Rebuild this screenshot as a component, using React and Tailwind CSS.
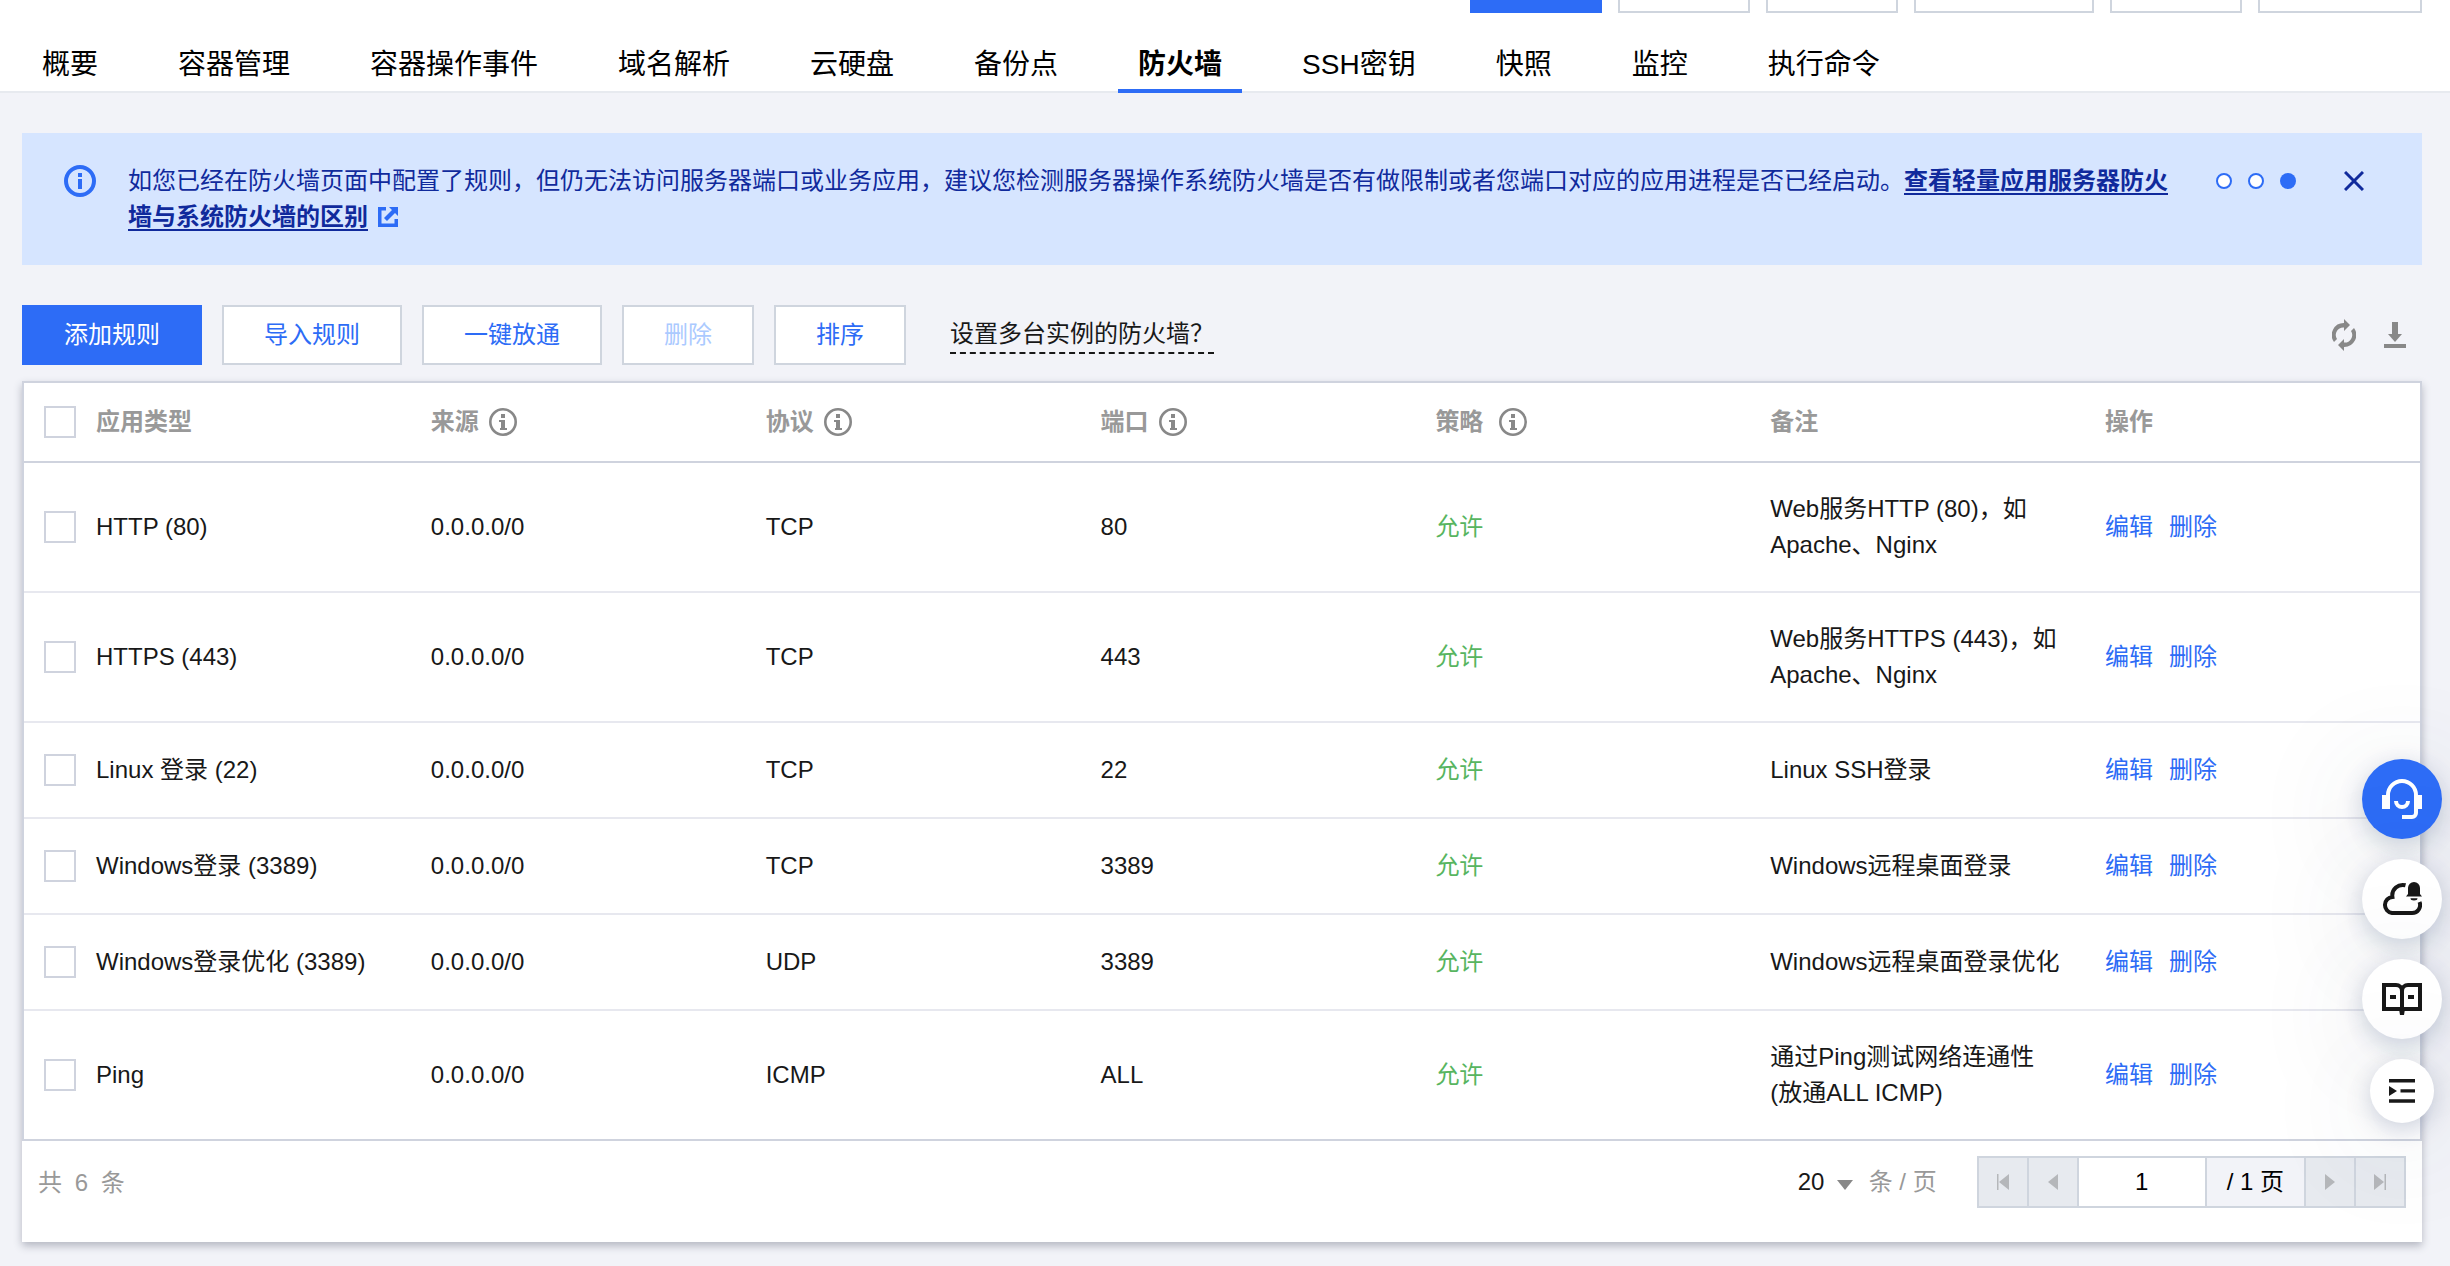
import React, { useState } from "react";

const tabs = [
  "概要",
  "容器管理",
  "容器操作事件",
  "域名解析",
  "云硬盘",
  "备份点",
  "防火墙",
  "SSH密钥",
  "快照",
  "监控",
  "执行命令",
];

const rules = [
  { id: 1, app: "HTTP (80)", source: "0.0.0.0/0", protocol: "TCP", port: "80", remark: "Web服务HTTP (80)，如Apache、Nginx" },
  { id: 2, app: "HTTPS (443)", source: "0.0.0.0/0", protocol: "TCP", port: "443", remark: "Web服务HTTPS (443)，如Apache、Nginx" },
  { id: 3, app: "Linux 登录 (22)", source: "0.0.0.0/0", protocol: "TCP", port: "22", remark: "Linux SSH登录" },
  { id: 4, app: "Windows登录 (3389)", source: "0.0.0.0/0", protocol: "TCP", port: "3389", remark: "Windows远程桌面登录" },
  { id: 5, app: "Windows登录优化 (3389)", source: "0.0.0.0/0", protocol: "UDP", port: "3389", remark: "Windows远程桌面登录优化" },
  { id: 6, app: "Ping", source: "0.0.0.0/0", protocol: "ICMP", port: "ALL", remark: "通过Ping测试网络连通性 (放通ALL ICMP)" },
];

const columns = [
  { title: "应用类型" },
  { title: "来源", info: true },
  { title: "协议", info: true },
  { title: "端口", info: true },
  { title: "策略", info: true, wide: true },
  { title: "备注" },
  { title: "操作" },
];

// -----------------------------------------------------------------------------
// Icons
// -----------------------------------------------------------------------------
function InfoIcon({ className }) {
  return (
    <svg viewBox="0 0 28 28" className={className} fill="none" aria-hidden="true">
      <circle cx="14" cy="14" r="12.7" stroke="currentColor" strokeWidth="2.6" />
      <path d="M12 6h4v4h-4zM10 12h6v8h2v2h-7v-2h1v-6h-2z" fill="currentColor" />
    </svg>
  );
}

function BannerInfoIcon() {
  return (
    <svg viewBox="0 0 32 32" className="size-8 shrink-0 text-[#2d6cf6]" fill="none" aria-hidden="true">
      <circle cx="16" cy="16" r="14" stroke="currentColor" strokeWidth="4" />
      <path d="M14 8h4v4h-4zM14 14h4v10h-4z" fill="currentColor" />
    </svg>
  );
}

function ExternalIcon() {
  return (
    <svg viewBox="0 0 20 20" className="ml-2.5 inline-block size-5 align-[-2px] text-[#2d6cf6]" aria-hidden="true">
      <path d="M0 0h8v3.5H3.500v13h13V12H20v8H0zM11 0h9v9l-3-3-8 8-3-3 8-8z" fill="currentColor" />
    </svg>
  );
}

function RefreshIcon() {
  return (
    <svg viewBox="0 0 24 32" className="h-8 w-6" aria-hidden="true">
      <path
        d="M12 0l6 6-6 6V8.500a7.500 7.500 0 0 0-7 11.500l-3 3A12 12 0 0 1 12 4zM12 32l-6-6 6-6v3.500a7.500 7.500 0 0 0 7-11.500l3-3a12 12 0 0 1-10 19z"
        fill="currentColor"
      />
    </svg>
  );
}

function DownloadIcon() {
  return (
    <svg viewBox="0 0 22 26" className="h-[26px] w-[22px]" aria-hidden="true">
      <path d="M8 0h6v12h4l-7 8-7-8h4zM0 22h22v4H0z" fill="currentColor" />
    </svg>
  );
}

function HeadsetIcon() {
  return (
    <svg viewBox="0 0 40 40" className="size-10" fill="none" aria-hidden="true">
      <path d="M6 18v-2a14 14 0 0 1 28 0v18a4 4 0 0 1-4 4H20" stroke="currentColor" strokeWidth="4" />
      <path d="M0 16h8v14H0zM32 16h8v14h-8z" fill="currentColor" />
      <path d="M14 22a6 6 0 0 0 12 0" stroke="currentColor" strokeWidth="4" />
    </svg>
  );
}

function CloudBellIcon() {
  return (
    <svg viewBox="0 0 40 40" className="size-10" fill="none" aria-hidden="true">
      <path
        d="M23.500 6.300A10.500 10.500 0 0 0 10.400 17.900A8.100 8.100 0 0 0 10 34h20a8 8 0 0 0 7.500-11"
        stroke="currentColor"
        strokeWidth="4"
      />
      <path d="M26 15V9a6 6 0 0 1 12 0v6l2 2.600H24zM28.500 19.200h7a3.500 2.200 0 0 1-7 0z" fill="currentColor" />
    </svg>
  );
}

function BookIcon() {
  return (
    <svg viewBox="0 0 40 40" className="size-10" fill="none" aria-hidden="true">
      <path d="M20 33V12a6 6 0 0 0-6-6H2v24h36V6H26a6 6 0 0 0-6 6" stroke="currentColor" strokeWidth="4" />
      <path d="M8 16h6v4H8zM26 16h6v4h-6zM17 30h6l-1 6h-4z" fill="currentColor" />
    </svg>
  );
}

function IndentIcon() {
  return (
    <svg viewBox="0 0 26 24" className="h-6 w-[26px]" aria-hidden="true">
      <path d="M0 0h26v3.500H0zM11.500 10.200H26v3.300H11.500zM0 20.200h26v3.500H0zM0 7l8 5-8 5z" fill="currentColor" />
    </svg>
  );
}

// -----------------------------------------------------------------------------
// Header: instance actions and tabs
// -----------------------------------------------------------------------------
function PageHeader() {
  return (
    <header className="border-b-2 border-[#e7eaef] bg-white">
      <div className="flex h-[13px] justify-end gap-4 px-7" aria-hidden="true">
        <div className="w-[132px] bg-[#2d6cf6]" />
        <div className="w-[132px] border-2 border-t-0 border-[#cfd5de]" />
        <div className="w-[132px] border-2 border-t-0 border-[#cfd5de]" />
        <div className="w-[180px] border-2 border-t-0 border-[#cfd5de]" />
        <div className="w-[132px] border-2 border-t-0 border-[#cfd5de]" />
        <div className="w-[164px] border-2 border-t-0 border-[#cfd5de]" />
      </div>
      <nav className="-mb-0.5 flex gap-10 px-[22px] pt-6">
        {tabs.map(tab => (
          <a
            key={tab}
            href="#"
            className={
              tab === "防火墙"
                ? "border-b-4 border-[#2d6cf6] px-5 pt-2 pb-1 text-[28px] leading-10 font-bold text-black"
                : "border-b-4 border-transparent px-5 pt-2 pb-1 text-[28px] leading-10 text-black"
            }
          >
            {tab}
          </a>
        ))}
      </nav>
    </header>
  );
}

function Notice() {
  return (
    <section className="flex bg-[#d6e5ff] py-[30px] pr-[58px] pl-[42px] leading-9 text-[#102a9c]">
      <div className="flex h-9 items-center">
        <BannerInfoIcon />
      </div>
      <p className="ml-8 flex-1">
        如您已经在防火墙页面中配置了规则，但仍无法访问服务器端口或业务应用，建议您检测服务器操作系统防火墙是否有做限制或者您端口对应的应用进程是否已经启动。
        <a href="#" className="font-bold underline decoration-2 underline-offset-4">
          查看轻量应用服务器防火墙与系统防火墙的区别
        </a>
        <ExternalIcon />
      </p>
      <div className="ml-10 flex h-9 items-center gap-4">
        <button aria-label="1" className="size-4 rounded-full border-2 border-[#2d6cf6] bg-white" />
        <button aria-label="2" className="size-4 rounded-full border-2 border-[#2d6cf6] bg-white" />
        <button aria-label="3" className="size-4 rounded-full bg-[#2d6cf6]" />
      </div>
      <button aria-label="关闭" className="ml-12 flex h-9 items-center">
        <svg viewBox="0 0 20 20" className="size-5" fill="none" aria-hidden="true">
          <path d="M1 1l18 18M19 1L1 19" stroke="currentColor" strokeWidth="3" />
        </svg>
      </button>
    </section>
  );
}

function Toolbar() {
  const plain = "h-15 border-2 border-[#cfd5de] bg-white px-10 text-[#2d6cf6]";
  return (
    <div className="mt-10 flex items-center gap-5">
      <button className="h-15 bg-[#2d6cf6] px-[42px] text-white">添加规则</button>
      <button className={plain}>导入规则</button>
      <button className={plain}>一键放通</button>
      <button disabled className="h-15 border-2 border-[#cfd5de] bg-white px-10 text-[#abcaff]">
        删除
      </button>
      <button className={plain}>排序</button>
      <a href="#" className="ml-6 border-b-2 border-dashed border-[#181818] leading-9 text-[#181818]">
        设置多台实例的防火墙？
      </a>
      <div className="mr-4 ml-auto flex items-center gap-7 text-[#888]">
        <button aria-label="刷新">
          <RefreshIcon />
        </button>
        <button aria-label="下载">
          <DownloadIcon />
        </button>
      </div>
    </div>
  );
}

// -----------------------------------------------------------------------------
// Rules table
// -----------------------------------------------------------------------------
function Check({ label, checked, onChange }) {
  return (
    <input
      type="checkbox"
      aria-label={label}
      checked={checked}
      onChange={onChange}
      className="block size-8 appearance-none border-2 border-[#cfd3de] bg-white checked:bg-[#2d6cf6]"
    />
  );
}

function RulesTable() {
  const [selected, setSelected] = useState([]);
  const allSelected = selected.length === rules.length;

  const toggle = id =>
    setSelected(selected.includes(id) ? selected.filter(s => s !== id) : [...selected, id]);

  return (
    <table className="w-full table-fixed border-separate border-spacing-0 border-2 border-[#cfd3de] text-left text-[#181818]">
      <colgroup>
        <col className="w-[52px]" />
        {columns.map(col => (
          <col key={col.title} />
        ))}
      </colgroup>
      <thead className="text-[#999]">
        <tr>
          <th className="h-20 border-b-2 border-[#cfd3de] pl-5">
            <Check
              label="全选"
              checked={allSelected}
              onChange={() => setSelected(allSelected ? [] : rules.map(r => r.id))}
            />
          </th>
          {columns.map(col => (
            <th key={col.title} className="h-20 border-b-2 border-[#cfd3de] px-5 font-bold">
              <span className={col.wide ? "flex items-center gap-4" : "flex items-center gap-2.5"}>
                {col.title}
                {col.info && <InfoIcon className="size-7 text-[#888]" />}
              </span>
            </th>
          ))}
        </tr>
      </thead>
      <tbody className="[&_td]:h-24 [&_td]:border-b-2 [&_td]:border-[#e7e8ef] [&_td]:px-5 [&_td]:py-7 [&_tr:last-child_td]:border-b-0">
        {rules.map(rule => (
          <tr key={rule.id}>
            <td>
              <Check label={rule.app} checked={selected.includes(rule.id)} onChange={() => toggle(rule.id)} />
            </td>
            <td>{rule.app}</td>
            <td>{rule.source}</td>
            <td>{rule.protocol}</td>
            <td>{rule.port}</td>
            <td className="text-[#57b560]">允许</td>
            <td>{rule.remark}</td>
            <td>
              <div className="flex gap-4 text-[#2d6cf6]">
                <a href="#">编辑</a>
                <a href="#">删除</a>
              </div>
            </td>
          </tr>
        ))}
      </tbody>
    </table>
  );
}

function PageButton({ label, children }) {
  return (
    <button
      disabled
      aria-label={label}
      className="-ml-0.5 flex w-13 items-center justify-center border-2 border-[#cfd5de] bg-[#e7eaef] text-[#b5b7ba]"
    >
      <svg viewBox="0 0 12 16" className="h-4 w-3" aria-hidden="true">
        {children}
      </svg>
    </button>
  );
}

function Pagination() {
  return (
    <div className="flex items-start justify-between bg-white pt-[15px] pr-4 pb-8 pl-4 text-[#999]">
      <p className="leading-[54px]">
        共 <span className="mx-1.5">{rules.length}</span> 条
      </p>
      <div className="flex items-center">
        <div className="relative flex items-center">
          <select
            aria-label="每页条数"
            defaultValue="20"
            className="w-[55px] appearance-none bg-transparent leading-9 text-[#181818]"
          >
            <option>20</option>
            <option>50</option>
          </select>
          <svg viewBox="0 0 16 10" className="pointer-events-none absolute right-0 bottom-2.5 h-2.5 w-4 text-[#888]" aria-hidden="true">
            <path d="M0 0h16l-8 10z" fill="currentColor" />
          </svg>
        </div>
        <span className="ml-4">条 / 页</span>
        <div className="ml-[42px] flex h-13">
          <PageButton label="第一页">
            <path d="M0 0h1.500v16H0zM12 0v16L2 8z" fill="currentColor" />
          </PageButton>
          <PageButton label="上一页">
            <path d="M11 0v16L1 8z" fill="currentColor" />
          </PageButton>
          <input
            aria-label="页码"
            defaultValue="1"
            className="-ml-0.5 w-[130px] border-2 border-[#cfd5de] bg-white text-center text-black"
          />
          <span className="-ml-0.5 border-2 border-[#cfd5de] bg-[#f2f3f8] px-5 leading-12 text-black">/ 1 页</span>
          <PageButton label="下一页">
            <path d="M1 0v16l10-8z" fill="currentColor" />
          </PageButton>
          <PageButton label="最后一页">
            <path d="M0 0v16l10-8zM10.500 0H12v16h-1.500z" fill="currentColor" />
          </PageButton>
        </div>
      </div>
    </div>
  );
}

// Shortcuts floating over the right edge
function FloatingTools() {
  const round =
    "flex size-20 items-center justify-center rounded-full bg-white text-[#181818] shadow-[0_6px_24px_rgba(55,75,120,0.24),0_16px_120px_rgba(55,75,100,0.16)]";
  return (
    <aside className="fixed right-2 bottom-[143px] flex flex-col items-center gap-5">
      <button
        aria-label="在线客服"
        className="flex size-20 items-center justify-center rounded-full bg-[#2d6cf6] text-white shadow-[0_6px_24px_rgba(55,75,120,0.24),0_16px_120px_rgba(55,75,100,0.16)]"
      >
        <HeadsetIcon />
      </button>
      <button aria-label="消息" className={round}>
        <CloudBellIcon />
      </button>
      <button aria-label="文档" className={round}>
        <BookIcon />
      </button>
      <button
        aria-label="收起"
        className="flex size-16 items-center justify-center rounded-full bg-white text-[#181818] shadow-[0_6px_24px_rgba(55,75,120,0.24),0_16px_120px_rgba(55,75,100,0.16)]"
      >
        <IndentIcon />
      </button>
    </aside>
  );
}

export default function App() {
  return (
    <div className="min-h-screen bg-[#f2f3f8] font-['Liberation_Sans','Noto_Sans_CJK_SC',sans-serif] text-2xl leading-9">
      <PageHeader />
      <main className="pt-10 pr-7 pb-6 pl-[22px]">
        <Notice />
        <Toolbar />
        <div className="mt-4 bg-white shadow-[0_4px_8px_rgba(54,58,80,0.32)]">
          <RulesTable />
          <Pagination />
        </div>
      </main>
      <FloatingTools />
    </div>
  );
}
